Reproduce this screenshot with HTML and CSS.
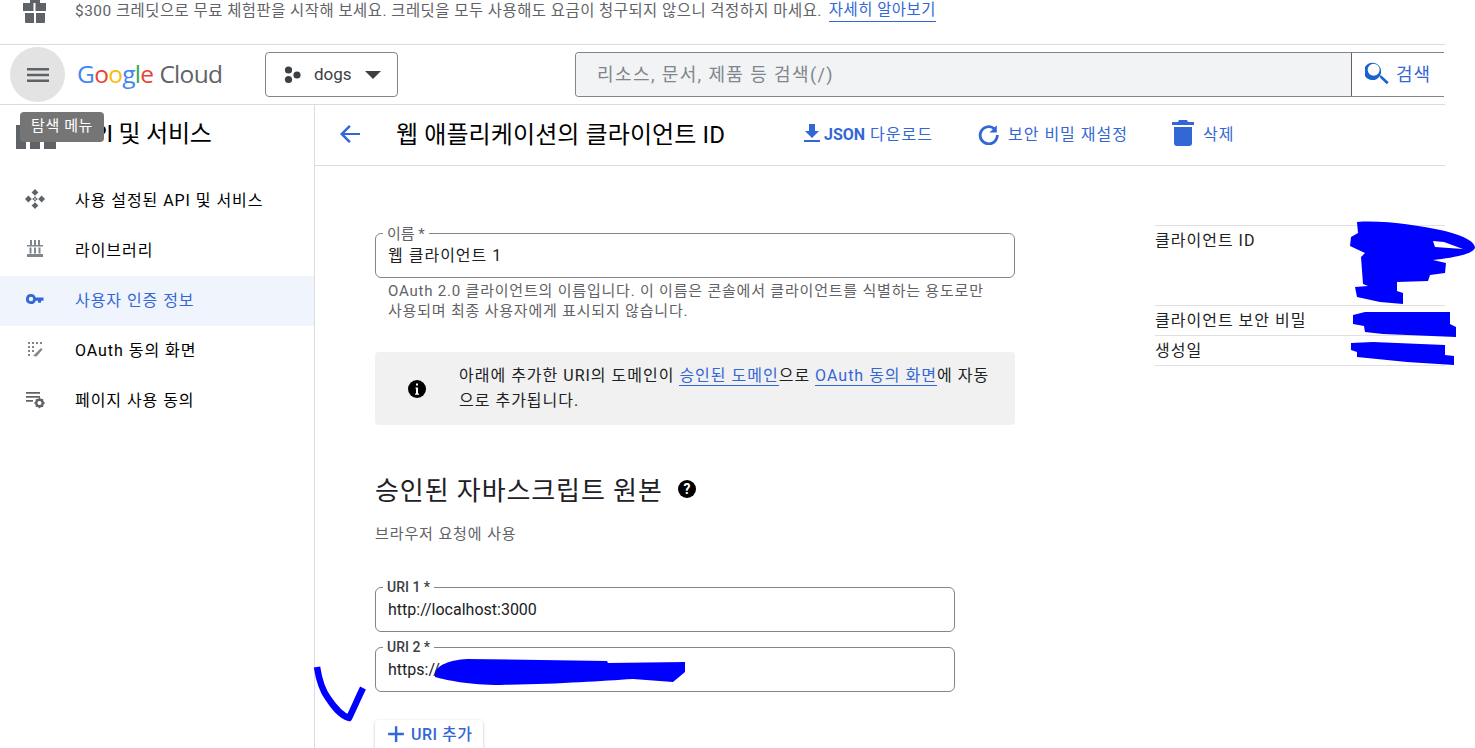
FILE: index.html
```html
<!DOCTYPE html>
<html lang="ko">
<head>
<meta charset="utf-8">
<title>웹 애플리케이션의 클라이언트 ID</title>
<link rel="stylesheet" href="styles.css">
</head>
<body>
<div class="page">
  <div class="banner">
    <svg class="gift" width="24" height="23" viewBox="0 0 24 23"><path d="M7 0h10v3H7zM0 3h23v8H0zM2 13h9v10H3a1 1 0 0 1-1-1zM13 13h9v9a1 1 0 0 1-1 1h-8z" fill="#5f6368"/><rect x="10.5" y="3" width="2" height="8" fill="#fff"/></svg>
    <span class="banner-text">$300 크레딧으로 무료 체험판을 시작해 보세요. 크레딧을 모두 사용해도 요금이 청구되지 않으니 걱정하지 마세요.</span>
    <a class="banner-link">자세히 알아보기</a>
  </div>
  <header class="topbar">
    <button class="menu-btn"><svg width="24" height="24" viewBox="0 0 24 24"><path d="M1 5h22v2.4H1zM1 10.8h22v2.4H1zM1 16.6h22V19H1z" fill="#5f6368"/></svg></button>
    <div class="logo"><span class="lg-b">G</span><span class="lg-r">o</span><span class="lg-y">o</span><span class="lg-b">g</span><span class="lg-g">l</span><span class="lg-r">e</span><span class="lg-c">Cloud</span></div>
    <button class="project">
      <svg width="18" height="18" viewBox="0 0 18 18"><circle cx="4.5" cy="4" r="3.6" fill="#3c4043"/><circle cx="4.5" cy="13.5" r="3.6" fill="#3c4043"/><circle cx="13" cy="9" r="3.6" fill="#3c4043"/></svg>
      <span>dogs</span>
      <svg width="16" height="8" viewBox="0 0 16 8"><path d="M0 0h16L8 8z" fill="#3c4043"/></svg>
    </button>
    <div class="search">
      <div class="search-input">리소스, 문서, 제품 등 검색(/)</div>
      <div class="search-btn">
        <svg width="24" height="24" viewBox="3 3 18 18"><path d="M15.5 14h-.8l-.3-.3A6.5 6.5 0 1 0 14 14.400l.3.3v.8l5 5 1.500-1.500zm-6 0a4.500 4.500 0 1 1 0-9 4.500 4.500 0 0 1 0 9z" fill="#1a62d0"/></svg>
        <span>검색</span>
      </div>
    </div>
  </header>
  <div class="body">
    <aside class="sidebar">
      <div class="side-title">
        <svg class="side-logo" width="40" height="24" viewBox="0 0 40 24"><path d="M0 0h10v24H0zM14 0h10v24H14zM28 0h12v24H28z" fill="#5f6368"/></svg>
        <h2>API 및 서비스</h2>
      </div>
      <nav class="nav">
        <a class="nav-item"><svg class="nav-icon" width="22" height="22" viewBox="0 0 22 22"><path d="M11 1l3.400 3.400L11 7.800 7.600 4.400zM11 14.200l3.400 3.400L11 21l-3.400-3.400zM4.400 7.600L7.800 11l-3.400 3.400L1 11zM17.600 7.600L21 11l-3.400 3.400L14.200 11z" fill="#5f6368"/><circle cx="11" cy="9.500" r="1" fill="#5f6368"/><circle cx="11" cy="12.500" r="1" fill="#5f6368"/><circle cx="9.500" cy="11" r="1" fill="#5f6368"/><circle cx="12.500" cy="11" r="1" fill="#5f6368"/></svg><span>사용 설정된 API 및 서비스</span></a>
        <a class="nav-item"><svg class="nav-icon" width="22" height="22" viewBox="0 0 22 22"><path d="M6 2h2v5H6zM10 2h2v5h-2zM14 2h2v5h-2zM3 7h16v1.500H3zM5.500 9.500h2v6h-2zM10 9.500h2v6h-2zM14.500 9.500h2v6h-2zM3 16h16v3H3z" fill="#80868b"/></svg><span>라이브러리</span></a>
        <a class="nav-item active"><svg class="nav-icon" width="22" height="22" viewBox="0 0 22 22"><path d="M7 6a5 5 0 1 0 4.700 6.700H14v2h3v-2h2.500v-3.300h-7.800A5 5 0 0 0 7 6zm0 2.800a2.200 2.200 0 1 1 0 4.400 2.200 2.200 0 0 1 0-4.400z" fill="#3367d6"/></svg><span>사용자 인증 정보</span></a>
        <a class="nav-item"><svg class="nav-icon" width="22" height="22" viewBox="0 0 22 22"><path d="M4 4h2v2H4zM8 4h2v2H8zM12 4h2v2h-2zM16 4h2v2h-2zM4 8h2v2H4zM8 8h2v2H8zM4 12h2v2H4zM8 12h2v2H8zM4 16h2v2H4zM9 18l8-8 1.500 1.500-6 7z" fill="#80868b"/></svg><span>OAuth 동의 화면</span></a>
        <a class="nav-item"><svg class="nav-icon" width="22" height="22" viewBox="0 0 22 22"><path d="M2 4h14v1.800H2zM2 8h14v1.800H2zM2 12h7v1.800H2z" fill="#5f6368"/><circle cx="15.500" cy="15" r="3.300" fill="none" stroke="#5f6368" stroke-width="2.400"/><path d="M15.500 9.800v2M15.500 18.200v2M10.300 15h2M18.700 15h2M11.900 11.400l1.400 1.400M17.700 17.200l1.400 1.400M19.100 11.400l-1.400 1.400M13.300 17.200l-1.400 1.400" stroke="#5f6368" stroke-width="1.600"/></svg><span>페이지 사용 동의</span></a>
      </nav>
    </aside>
    <main class="main">
      <div class="page-head">
        <svg class="back" width="24" height="24" viewBox="0 0 24 24"><path d="M22 11H6.500l6.300-6.300L11 3 2 12l9 9 1.800-1.700L6.500 13H22z" fill="#3367d6"/></svg>
        <h1>웹 애플리케이션의 클라이언트 ID</h1>
        <div class="actions">
          <a class="action act-json"><svg width="18" height="20" viewBox="0 0 18 20"><path d="M6 1h6v7h4l-7 7-7-7h4zM1 17h16v2H1z" fill="#3367d6"/></svg><span><b>JSON</b> 다운로드</span></a>
          <a class="action act-reset"><svg width="24" height="24" viewBox="0 0 24 24"><path d="M19.800 4.200v7.300h-7.300l3.300-3.300A7.200 7.200 0 1 0 19 14h2.700A10 10 0 1 1 17.700 6.300z" fill="#3367d6"/></svg><span>보안 비밀 재설정</span></a>
          <a class="action act-del"><svg width="22" height="26" viewBox="0 0 22 26"><path d="M7 0h8l1 2h6v3H0V2h6zM2 7h18v16a3 3 0 0 1-3 3H5a3 3 0 0 1-3-3z" fill="#3367d6"/></svg><span>삭제</span></a>
        </div>
      </div>
      <div class="content">
        <section class="form">
          <div class="field">
            <label class="field-label">이름 *</label>
            <div class="field-value ko">웹 클라이언트 1</div>
          </div>
          <p class="helper">OAuth 2.0 클라이언트의 이름입니다. 이 이름은 콘솔에서 클라이언트를 식별하는 용도로만 사용되며 최종 사용자에게 표시되지 않습니다.</p>
          <div class="notice">
            <svg class="notice-icon" width="20" height="20" viewBox="0 0 20 20"><circle cx="10" cy="10" r="9" fill="#000"/><path d="M9 4.500h2v2H9zM8.500 8.500H11v6h1v1.200H8v-1.200h1V9.700h-.5z" fill="#fff"/></svg>
            <p>아래에 추가한 URI의 도메인이 <a class="link">승인된 도메인</a>으로 <a class="link">OAuth 동의 화면</a>에 자동으로 추가됩니다.</p>
          </div>
          <div class="section-head">
            <h3>승인된 자바스크립트 원본</h3>
            <svg class="help-icon" width="20" height="20" viewBox="0 0 20 20"><circle cx="10" cy="10" r="9" fill="#000"/><text x="10" y="14.500" text-anchor="middle" class="help-mark">?</text></svg>
          </div>
          <p class="sub">브라우저 요청에 사용</p>
          <div class="field field-uri">
            <label class="field-label strong">URI 1 *</label>
            <div class="field-value">http://localhost:3000</div>
          </div>
          <div class="field field-uri second">
            <label class="field-label strong">URI 2 *</label>
            <div class="field-value">https://</div>
          </div>
          <button class="add-btn"><svg width="18" height="18" viewBox="0 0 16 16"><path d="M7 1h2.200v5.900H15v2.200H9.200V15H7V9.100H1V6.900h6z" fill="#3367d6"/></svg><span>URI 추가</span></button>
        </section>
        <aside class="meta">
          <div class="meta-row tall">클라이언트 ID</div>
          <div class="meta-row">클라이언트 보안 비밀</div>
          <div class="meta-row">생성일</div>
        </aside>
      </div>
    </main>
  </div>
  <div class="tooltip">탐색 메뉴</div>
  <svg class="scribble" width="1475" height="748" viewBox="0 0 1475 748">
    <path fill-rule="evenodd" d="M1357 222C1385 220 1420 226 1445 231C1465 236 1475 242 1475 248C1472 255 1450 258 1433 260L1446 263L1445 273L1430 275L1428 281L1397 282L1397 291L1403 293L1403 304L1380 302L1357 297L1355 287L1368 286L1363 284L1361 257L1365 253L1350 246L1351 237L1358 233ZM1433 241L1435 247L1463 249L1444 242Z" fill="#0000ff"/>
    <path d="M1353 315L1365 312L1450 312L1450 324L1456 327L1456 337L1383 334L1365 332L1364 326L1353 324Z" fill="#0000ff"/>
    <path d="M1351 343L1373 342L1445 345L1445 355L1454 356L1454 365L1407 362L1357 357L1357 352L1351 350Z" fill="#0000ff"/>
    <path d="M435 673C437 665 450 660 467 659L607 661L608 663L685 662L685 672L673 682L633 679C600 681 560 684 500 685C470 685 445 680 435 677Z" fill="#0000ff"/>
    <path d="M317 667C319 680 322 690 328 698C334 707 340 715 349 718C354 708 358 698 363 688" fill="none" stroke="#0000ff" stroke-width="6.500" stroke-linejoin="round"/>
  </svg>
</div>
</body>
</html>
```

FILE: styles.css
```css
* { box-sizing: border-box; }
html, body { margin: 0; padding: 0; height: 100%; overflow: hidden; background: #fff; }
body { font-family: Roboto, "Noto Sans CJK KR", sans-serif; color: #000; }
a { text-decoration: none; color: inherit; }
h1, h2, h3, p { margin: 0; font-weight: 400; }
button { font-family: inherit; }

.page { position: relative; width: 1475px; height: 748px; overflow: hidden; }

.banner { width: 1445px; height: 45px; padding-left: 23px; border-bottom: 1px solid #dadce0; display: flex; align-items: flex-start; font-size: 15.4px; letter-spacing: .5px; color: #5f6368; white-space: nowrap; }
.gift { flex: none; margin-right: 28px; }
.banner-text { line-height: 23px; margin-right: 7px; }
.banner-link { line-height: 21px; color: #3367d6; border-bottom: 1px solid #3367d6; height: 22px; }

.topbar { width: 1445px; height: 60px; border-bottom: 1px solid #dadce0; display: flex; align-items: flex-start; padding-left: 10px; }
.menu-btn { width: 55px; height: 55px; margin-top: 2px; border: 0; border-radius: 50%; background: #e3e3e3; display: flex; align-items: center; justify-content: center; padding: 0; }
.logo { font-family: "Open Sans", Roboto, sans-serif; font-size: 24.5px; line-height: 57px; letter-spacing: -.7px; margin-left: 12px; width: 188px; white-space: nowrap; }
.lg-b { color: #4285f4; } .lg-r { color: #ea4335; } .lg-y { color: #fbbc05; } .lg-g { color: #34a853; }
.lg-c { color: #5f6368; margin-left: 6px; }
.project { width: 133px; height: 45px; margin-top: 7px; background: #fff; border: 1px solid #80868b; border-radius: 4px; display: flex; align-items: center; padding: 0 16px 2px 18px; font-size: 17px; color: #3c4043; }
.project svg { margin-top: 2px; }
.project span { margin: 0 auto 0 12px; }
.search { width: 869px; height: 45px; margin: 7px 0 0 177px; display: flex; border: 1px solid #80868b; border-width: 1px 0 1px 1px; border-radius: 4px 0 0 4px; overflow: hidden; }
.search-input { flex: 1; background: #f1f3f4; padding-left: 21px; font-size: 18px; letter-spacing: 1.4px; line-height: 43px; color: #80868b; white-space: nowrap; }
.search-btn { width: 93px; display: flex; align-items: center; padding: 0 0 4px 13px; gap: 7px; border-left: 1px solid #5f6368; color: #3367d6; font-size: 18px; letter-spacing: 1px; }

.body { display: flex; width: 1445px; height: 643px; }
.sidebar { width: 315px; flex: none; border-right: 1px solid #dadce0; }
.side-title { height: 61px; display: flex; align-items: center; padding: 0 0 8px 16px; }
.side-logo { flex: none; margin-top: 10px; }
.side-title h2 { font-size: 24px; letter-spacing: -.2px; margin-left: 20px; white-space: nowrap; }
.nav { padding-top: 10px; }
.nav-item { height: 50px; display: flex; align-items: center; padding: 0 0 5px 24px; font-size: 16px; letter-spacing: .95px; }
.nav-icon { flex: none; margin-right: 29px; }
.nav-item.active { background: #f0f4fd; color: #3367d6; }

.main { flex: 1; min-width: 0; }
.page-head { height: 61px; display: flex; align-items: center; border-bottom: 1px solid #dadce0; padding: 0 0 5px 23px; }
.back { flex: none; margin-top: 3px; }
.page-head h1 { font-size: 24px; letter-spacing: .1px; margin-left: 34px; width: 407px; white-space: nowrap; }
.actions { display: flex; align-items: center; color: #3367d6; font-size: 16px; letter-spacing: 1px; }
.action { display: flex; align-items: center; white-space: nowrap; }
.action b { font-weight: 700; letter-spacing: 0; }
.act-json { gap: 3px; margin-right: 44px; }
.act-reset { gap: 7px; margin-right: 44px; }
.act-del { gap: 9px; }

.content { display: flex; padding-left: 60px; }
.form { width: 640px; padding-top: 67px; flex: none; }
.field { position: relative; height: 45px; border: 1px solid #80868b; border-radius: 6px; padding: 0 12px 3px; display: flex; align-items: center; font-size: 16px; color: #202124; }
.field-value { white-space: nowrap; }
.field-value.ko { letter-spacing: 1px; }
.field-label { position: absolute; left: 7px; top: -8px; padding: 0 4px; background: #fff; font-size: 15px; line-height: 17px; color: #5f6368; }
.field-label.strong { color: #3c4043; font-weight: 500; font-size: 14px; top: -9px; }
.helper { padding: 3px 28px 0 13px; height: 74px; font-size: 15px; letter-spacing: .8px; line-height: 20px; color: #5f6368; }
.notice { height: 73px; background: #f1f1f1; border-radius: 4px; display: flex; align-items: center; padding: 0 20px 2px 32px; }
.notice-icon { flex: none; margin: 2px 32px 0 0; }
.notice p { font-size: 16px; letter-spacing: 1px; line-height: 25px; color: #202124; }
.link { color: #3367d6; border-bottom: 1px solid #3367d6; }
.section-head { display: flex; align-items: center; gap: 14px; margin-top: 44px; height: 38px; }
.section-head h3 { font-size: 26px; letter-spacing: .9px; color: #202124; white-space: nowrap; }
.help-icon { margin-top: 2px; }
.help-mark { font-family: Roboto, sans-serif; font-size: 14px; font-weight: 700; fill: #fff; }
.sub { margin-top: 17px; font-size: 15px; letter-spacing: .9px; line-height: 20px; color: #5f6368; }
.field-uri { width: 580px; margin-top: 43px; padding-bottom: 1px; }
.field-uri.second { margin-top: 15px; }
.add-btn { margin-top: 28px; width: 108px; height: 40px; background: #fff; border: 0; border-radius: 4px; box-shadow: 0 1px 3px rgba(60,64,67,.35); display: flex; align-items: flex-start; gap: 6px; padding: 5px 0 0 12px; color: #3367d6; font-size: 16px; font-weight: 500; letter-spacing: .5px; line-height: 20px; white-space: nowrap; }

.meta { width: 290px; margin: 59px 0 0 140px; font-size: 16px; letter-spacing: 1px; color: #202124; border-top: 1px solid #e0e0e0; align-self: flex-start; }
.meta-row { height: 30px; border-bottom: 1px solid #e0e0e0; padding-top: 4px; line-height: 22px; white-space: nowrap; }
.meta-row.tall { height: 80px; }

.tooltip { position: absolute; left: 20px; top: 112px; width: 84px; height: 30px; background: #757575; border-radius: 4px; color: #fff; font-size: 15px; letter-spacing: .6px; line-height: 28px; text-align: center; }
.scribble { position: absolute; left: 0; top: 0; pointer-events: none; }
```
